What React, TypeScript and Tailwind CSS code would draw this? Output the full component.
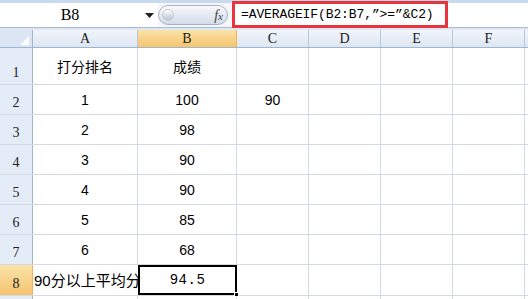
import React from "react";

const cols = ["A", "B", "C", "D", "E", "F"];
const widths = ["w-[105px]", "w-[99px]", "w-[72px]", "w-[72px]", "w-[72px]", "w-[72px]"];

const rows: { n: number; h: string; a: string; b: string; c?: string }[] = [
  { n: 1, h: "h-[37px]", a: "打分排名", b: "成绩" },
  { n: 2, h: "h-[30px]", a: "1", b: "100", c: "90" },
  { n: 3, h: "h-[30px]", a: "2", b: "98" },
  { n: 4, h: "h-[30px]", a: "3", b: "90" },
  { n: 5, h: "h-[30px]", a: "4", b: "90" },
  { n: 6, h: "h-[30px]", a: "5", b: "85" },
  { n: 7, h: "h-[30px]", a: "6", b: "68" },
];

const serif = "font-['Liberation_Serif','Noto_Sans_CJK_SC',serif]";
const sans = "font-['Liberation_Sans','Noto_Sans_CJK_SC',sans-serif]";

export default function App() {
  return (
    <div className="h-[299px] w-[528px] overflow-hidden bg-white">
      {/* formula bar */}
      <div className="h-[3px] bg-[#c9d9ee]" />
      <div className="flex h-[25px] items-stretch border-b border-[#a9bcd6] bg-[#e4ebf5]">
        <div className={`flex w-[140px] items-center justify-center bg-white text-[16px] text-black ${serif}`}>
          B8
        </div>
        <div className="flex w-[18px] items-center justify-center bg-white">
          <svg width="9" height="5" viewBox="0 0 9 5">
            <path d="M0 0 L9 0 L4.5 5 Z" fill="#222" />
          </svg>
        </div>
        <div className="flex w-[74px] items-center bg-[#f4f6fa] pr-1">
          <div className="relative flex h-[20px] flex-1 items-center justify-end rounded-full border border-[#a7b4c6] bg-gradient-to-b from-[#f7f9fc] to-[#d3dce8] pr-1">
            <div className="absolute left-[3px] top-[3px] h-[12px] w-[12px] rounded-full border border-[#c4ccd8] bg-gradient-to-b from-[#ffffff] to-[#b9c3d0]" />
            <span className="font-['Liberation_Serif',serif] text-[14px] italic text-[#444]">
              f<span className="text-[11px]">x</span>
            </span>
          </div>
        </div>
        <div className="-mt-[2px] flex h-[27px] w-[216px] items-center border-[3px] border-[#e8343c] bg-white pl-[6px]">
          <span className="font-['Liberation_Mono',monospace] text-[13px] tracking-[-0.1px] text-black">
            =AVERAGEIF(B2:B7,”&gt;=”&amp;C2)
          </span>
        </div>
        <div className="flex-1 bg-white" />
      </div>
      <div className="h-[2px] bg-[#dfe7f2]" />

      {/* header row */}
      <div className="flex h-[18px] border-b border-[#9eb6ce] bg-gradient-to-b from-[#f1f5fb] to-[#dde6f2]">
        <div className="relative w-[33px] border-r border-[#9eb6ce] bg-[#dbe5f3]">
          <svg className="absolute bottom-[2px] right-[3px]" width="9" height="9" viewBox="0 0 9 9">
            <path d="M9 0 L9 9 L0 9 Z" fill="#fff" opacity="0.9" />
          </svg>
        </div>
        {cols.map((c, i) => (
          <div
            key={c}
            className={`flex ${widths[i]} items-center justify-center border-r text-[14px] text-[#222] ${serif} ${
              c === "B"
                ? "border-[#f2b15a] bg-gradient-to-b from-[#fbe3a8] to-[#f5c46e]"
                : "border-[#b8c9dd]"
            }`}
          >
            {c}
          </div>
        ))}
        <div className="flex-1" />
      </div>

      {/* data rows */}
      {rows.map((r) => (
        <div key={r.n} className={`flex ${r.h} border-b border-[#d4d9e3]`}>
          <div
            className={`flex w-[33px] items-end justify-center border-r border-[#9eb6ce] bg-[#e4ecf7] pb-[1px] text-[14px] text-[#222] ${serif}`}
          >
            {r.n}
          </div>
          <div className={`flex w-[105px] items-center justify-center border-r border-[#d4d9e3] pt-[2px] text-[14px] text-black ${sans}`}>
            {r.a}
          </div>
          <div className={`flex w-[99px] items-center justify-center border-r border-[#d4d9e3] pt-[2px] text-[14px] text-black ${sans}`}>
            {r.b}
          </div>
          <div className={`flex w-[72px] items-center justify-center border-r border-[#d4d9e3] pt-[2px] text-[14px] text-black ${sans}`}>
            {r.c ?? ""}
          </div>
          <div className="w-[72px] border-r border-[#d4d9e3]" />
          <div className="w-[72px] border-r border-[#d4d9e3]" />
          <div className="w-[72px] border-r border-[#d4d9e3]" />
          <div className="flex-1" />
        </div>
      ))}

      {/* row 8 */}
      <div className="flex h-[31px] border-b border-[#d4d9e3]">
        <div
          className={`flex w-[33px] items-end justify-center border-r border-[#f2b15a] bg-gradient-to-b from-[#fbe3a8] to-[#f5c46e] pb-[1px] text-[14px] text-[#222] ${serif}`}
        >
          8
        </div>
        <div className={`flex w-[105px] items-center overflow-hidden whitespace-nowrap pl-[1px] pt-[2px] text-[15px] text-black ${sans}`}>
          90分以上平均分
        </div>
        <div className="relative flex w-[99px] items-center justify-center border-2 border-black">
          <span className="font-['Liberation_Mono',monospace] text-[14px] tracking-[0.5px] text-black">94.5</span>
          <div className="absolute -bottom-[4px] -right-[4px] h-[5px] w-[5px] border border-white bg-black" />
        </div>
        <div className="w-[72px] border-r border-[#d4d9e3]" />
        <div className="w-[72px] border-r border-[#d4d9e3]" />
        <div className="w-[72px] border-r border-[#d4d9e3]" />
        <div className="w-[72px] border-r border-[#d4d9e3]" />
        <div className="flex-1" />
      </div>
      <div className="flex h-[10px]">
        <div className="w-[33px] border-r border-[#9eb6ce] bg-[#e4ecf7]" />
        <div className="w-[105px] border-r border-[#d4d9e3]" />
        <div className="w-[99px] border-r border-[#d4d9e3]" />
        <div className="w-[72px] border-r border-[#d4d9e3]" />
        <div className="w-[72px] border-r border-[#d4d9e3]" />
        <div className="w-[72px] border-r border-[#d4d9e3]" />
        <div className="w-[72px] border-r border-[#d4d9e3]" />
      </div>
    </div>
  );
}
